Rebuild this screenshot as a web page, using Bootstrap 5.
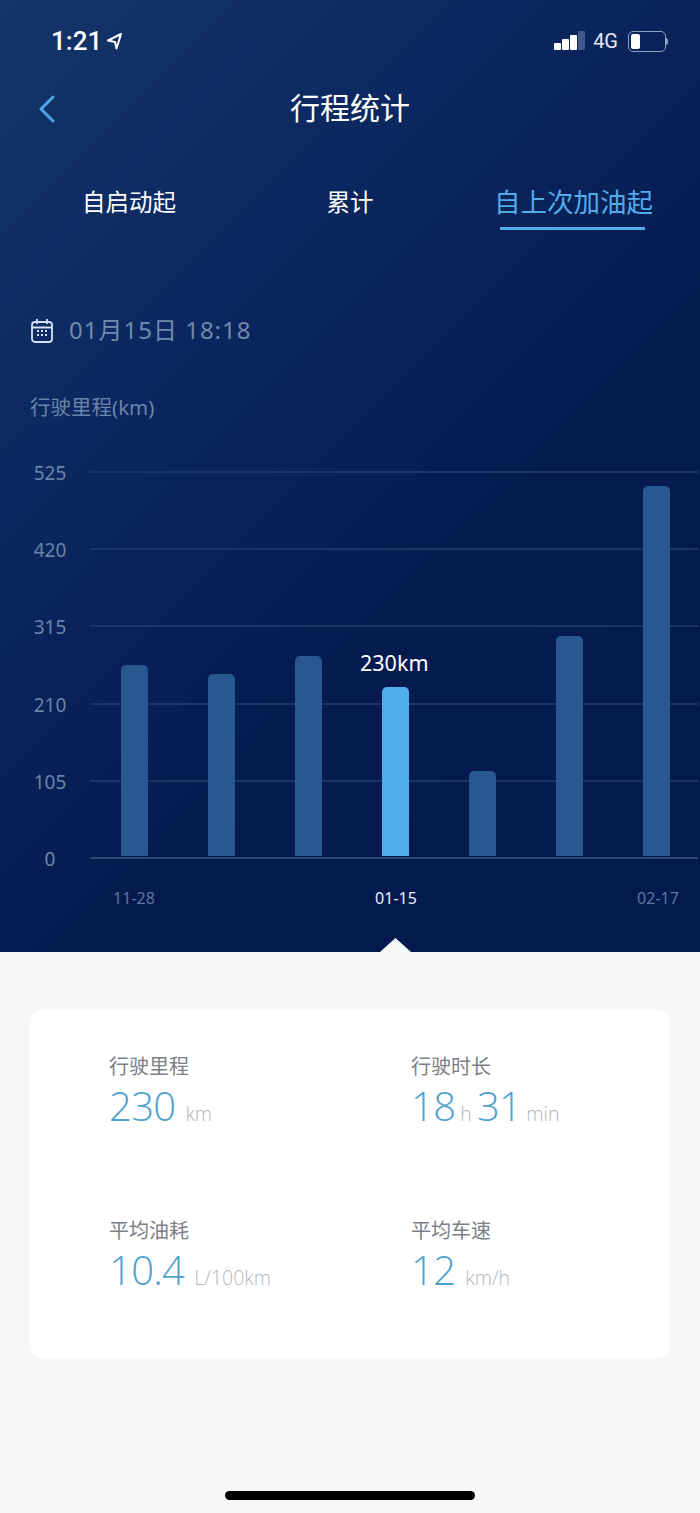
<!DOCTYPE html>
<html lang="zh-CN">
<head>
  <meta charset="UTF-8">
  <meta name="viewport" content="width=device-width, initial-scale=1.0">
  <title>行程统计</title>
  <link href="https://cdn.jsdelivr.net/npm/bootstrap@5.3.3/dist/css/bootstrap.min.css" rel="stylesheet">
  <style>
    body { background: #f6f7f9; font-family: "Noto Sans", "Noto Sans CJK SC", sans-serif; }
    .screen { width: 700px; height: 1513px; overflow: hidden; }
    .hero { height: 952px; background: linear-gradient(135deg, #14356a 0%, #0c2860 30%, #051b50 62%, #041a4e 100%); }

    .status-row { height: 82px; padding: 26px 32px 0 51px; color: #fff; }
    .clock { font: 500 26px/30px Roboto, sans-serif; }
    .net { font: 400 20px/30px Roboto, sans-serif; color: #e3e8f2; margin-right: 10px; }
    .batt { width: 38px; height: 21px; border: 1.5px solid #8ea0bf; border-radius: 5px; padding: 2px; }
    .batt-fill { width: 9px; background: #fff; border-radius: 2px; }
    .batt-tip { width: 2px; height: 7px; background: #8ea0bf; border-radius: 0 2px 2px 0; }

    .title-row { height: 52px; }
    .back-btn { left: 38px; top: 13px; }
    .page-title { font-size: 30px; line-height: 52px; color: #fff; }

    .trip-tabs { height: 97px; margin-top: 52px; }
    .trip-tab { top: 0; transform: translateX(-50%); color: #fff; font-size: 23.5px; line-height: 32px; white-space: nowrap; }
    .trip-tab.active { color: #52ace9; font-size: 26.5px; }
    .tab-line { left: 500px; top: 41px; width: 145px; height: 3px; background: #52ace9; }

    .date-row { margin-top: 32px; padding-left: 31px; height: 30px; gap: 16px; }
    .date-text { font-size: 24px; line-height: 30px; color: #7089ae; letter-spacing: 1px; }
    .axis-title { margin: 47px 0 0 30px; font-size: 20.5px; line-height: 30px; color: #6b84aa; }

    .plot { height: 386px; margin-top: 49px; }
    .grid-rows { padding-left: 90px; padding-right: 2px; }
    .grid-line { height: 77.2px; border-top: 2px solid #1b3566; }
    .grid-line:last-child { height: 0; border-top-color: #2a4677; }
    .y-tick { left: 30px; width: 40px; font-size: 19px; line-height: 24px; color: #6b84aa; transform: translateY(-10px); }
    .bars { left: 121px; bottom: 1px; height: 386px; gap: 60.500px; }
    .bar { width: 26.500px; background: #29578f; border-radius: 5px 5px 0 0; }
    .bar.active { background: #4fadec; }
    .bar-value { left: 360px; top: 180px; color: #fff; font-size: 21.5px; line-height: 24px; }

    .x-ticks { height: 20px; margin-top: 31px; }
    .x-tick { top: 0; transform: translateX(-50%); font-size: 16px; line-height: 20px; color: #5c779f; }
    .x-tick.active { color: #eaf0f8; }

    .pointer { left: 380px; top: 938px; width: 31px; height: 14px; background: #f6f7f9; clip-path: polygon(0 100%, 50% 0, 100% 100%); }

    .stats-panel { margin: 58px 30px 0; height: 348px; background: #fff; border-radius: 12px; padding: 42px 0 0 79px; grid-template-columns: 302px 1fr; grid-auto-rows: 164px; }
    .stat-label { font-size: 20px; line-height: 30px; color: #7b8087; }
    .stat-line { height: 50px; margin-top: -1px; color: #b3b7bc; font: 300 19.5px/50px "Open Sans", "Noto Sans", sans-serif; }
    .stat-num { font: 300 40px/50px "Open Sans", "Noto Sans", sans-serif; color: #4fa2ce; letter-spacing: -.7px; }
    .stat-unit { margin-left: 10px; }
    .home-bar { left: 225px; top: 1491px; width: 250px; height: 9px; background: #000; border-radius: 5px; }
  </style>
</head>
<body class="m-0">
  <div class="screen position-relative">
    <div class="hero">
      <!-- barra de status -->
      <div class="status-row d-flex justify-content-between align-items-start">
        <div class="d-flex align-items-center gap-1">
          <span class="clock">1:21</span>
          <svg width="17" height="18" viewBox="0 0 17 18" fill="none" stroke="#fff" stroke-width="2" stroke-linejoin="round"><path d="M15 2 2 8.500 9 10 10.500 16.500Z"/></svg>
        </div>
        <div class="d-flex align-items-center">
          <svg width="31" height="20" viewBox="0 0 31 20" class="me-2">
            <rect x="0" y="12" width="7" height="7" rx="1" fill="#fff"/>
            <rect x="8" y="8" width="7" height="11" rx="1" fill="#fff"/>
            <rect x="16" y="4" width="7" height="15" rx="1" fill="#fff"/>
            <rect x="24" y="0" width="7" height="19" rx="1" fill="#3f5887"/>
          </svg>
          <span class="net">4G</span>
          <div class="batt d-flex"><div class="batt-fill"></div></div>
          <div class="batt-tip"></div>
        </div>
      </div>

      <!-- titulo -->
      <div class="title-row position-relative text-center">
        <svg class="back-btn position-absolute" width="18" height="28" viewBox="0 0 18 28" fill="none" stroke="#4ea6e4" stroke-width="3" stroke-linecap="round" stroke-linejoin="round"><path d="M15 2 3 14l12 12"/></svg>
        <div class="page-title">行程统计</div>
      </div>

      <!-- abas -->
      <div class="trip-tabs position-relative">
        <div class="trip-tab position-absolute" style="left:129px">自启动起</div>
        <div class="trip-tab position-absolute" style="left:350px">累计</div>
        <div class="trip-tab active position-absolute" style="left:573.5px">自上次加油起</div>
        <div class="tab-line position-absolute"></div>
      </div>

      <div class="date-row d-flex align-items-center">
        <svg width="22" height="25" viewBox="0 0 22 25" fill="none" stroke="#d5e0f0" stroke-width="1.800">
          <rect x="1" y="4" width="20" height="20" rx="3"/>
          <path d="M1 9.500h20M6 1v5M16 1v5"/>
          <path d="M6 13h2M10 13h2M14 13h2M6 17h2M10 17h2M14 17h2" stroke-width="2"/>
        </svg>
        <span class="date-text">01月15日 18:18</span>
      </div>

      <div class="axis-title">行驶里程(km)</div>

      <!-- grafico -->
      <div class="plot position-relative">
        <div class="grid-rows">
          <div class="grid-line"></div>
          <div class="grid-line"></div>
          <div class="grid-line"></div>
          <div class="grid-line"></div>
          <div class="grid-line"></div>
          <div class="grid-line"></div>
        </div>
        <div id="yTicks"></div>
        <div id="bars" class="bars position-absolute d-flex align-items-end"></div>
        <div class="bar-value position-absolute">230km</div>
      </div>

      <div class="x-ticks position-relative">
        <div class="x-tick position-absolute" style="left:134px">11-28</div>
        <div class="x-tick active position-absolute" style="left:396px">01-15</div>
        <div class="x-tick position-absolute" style="left:658px">02-17</div>
      </div>
    </div>
    <div class="pointer position-absolute"></div>

    <!-- resumo -->
    <div class="stats-panel d-grid">
      <div>
        <div class="stat-label">行驶里程</div>
        <div class="stat-line"><span class="stat-num">230</span><span class="stat-unit">km</span></div>
      </div>
      <div>
        <div class="stat-label">行驶时长</div>
        <div class="stat-line"><span class="stat-num">18</span> h <span class="stat-num">31</span> min</div>
      </div>
      <div>
        <div class="stat-label">平均油耗</div>
        <div class="stat-line"><span class="stat-num">10.4</span><span class="stat-unit">L/100km</span></div>
      </div>
      <div>
        <div class="stat-label">平均车速</div>
        <div class="stat-line"><span class="stat-num">12</span><span class="stat-unit">km/h</span></div>
      </div>
    </div>
    <div class="home-bar position-absolute"></div>
  </div>

  <script src="https://cdn.jsdelivr.net/npm/bootstrap@5.3.3/dist/js/bootstrap.bundle.min.js"></script>
  <script>
    const alturas = [191, 182, 200, 169, 85, 220, 370];
    const barras = document.getElementById('bars');
    alturas.forEach((h, i) => {
      const b = document.createElement('div');
      b.className = i === 3 ? 'bar active' : 'bar';
      b.style.height = h + 'px';
      barras.appendChild(b);
    });

    const eixo = document.getElementById('yTicks');
    ['525', '420', '315', '210', '105', '0'].forEach((t, i) => {
      const d = document.createElement('div');
      d.className = 'y-tick position-absolute text-center';
      d.style.top = (i * 77.2) + 'px';
      d.textContent = t;
      eixo.appendChild(d);
    });
  </script>
</body>
</html>
